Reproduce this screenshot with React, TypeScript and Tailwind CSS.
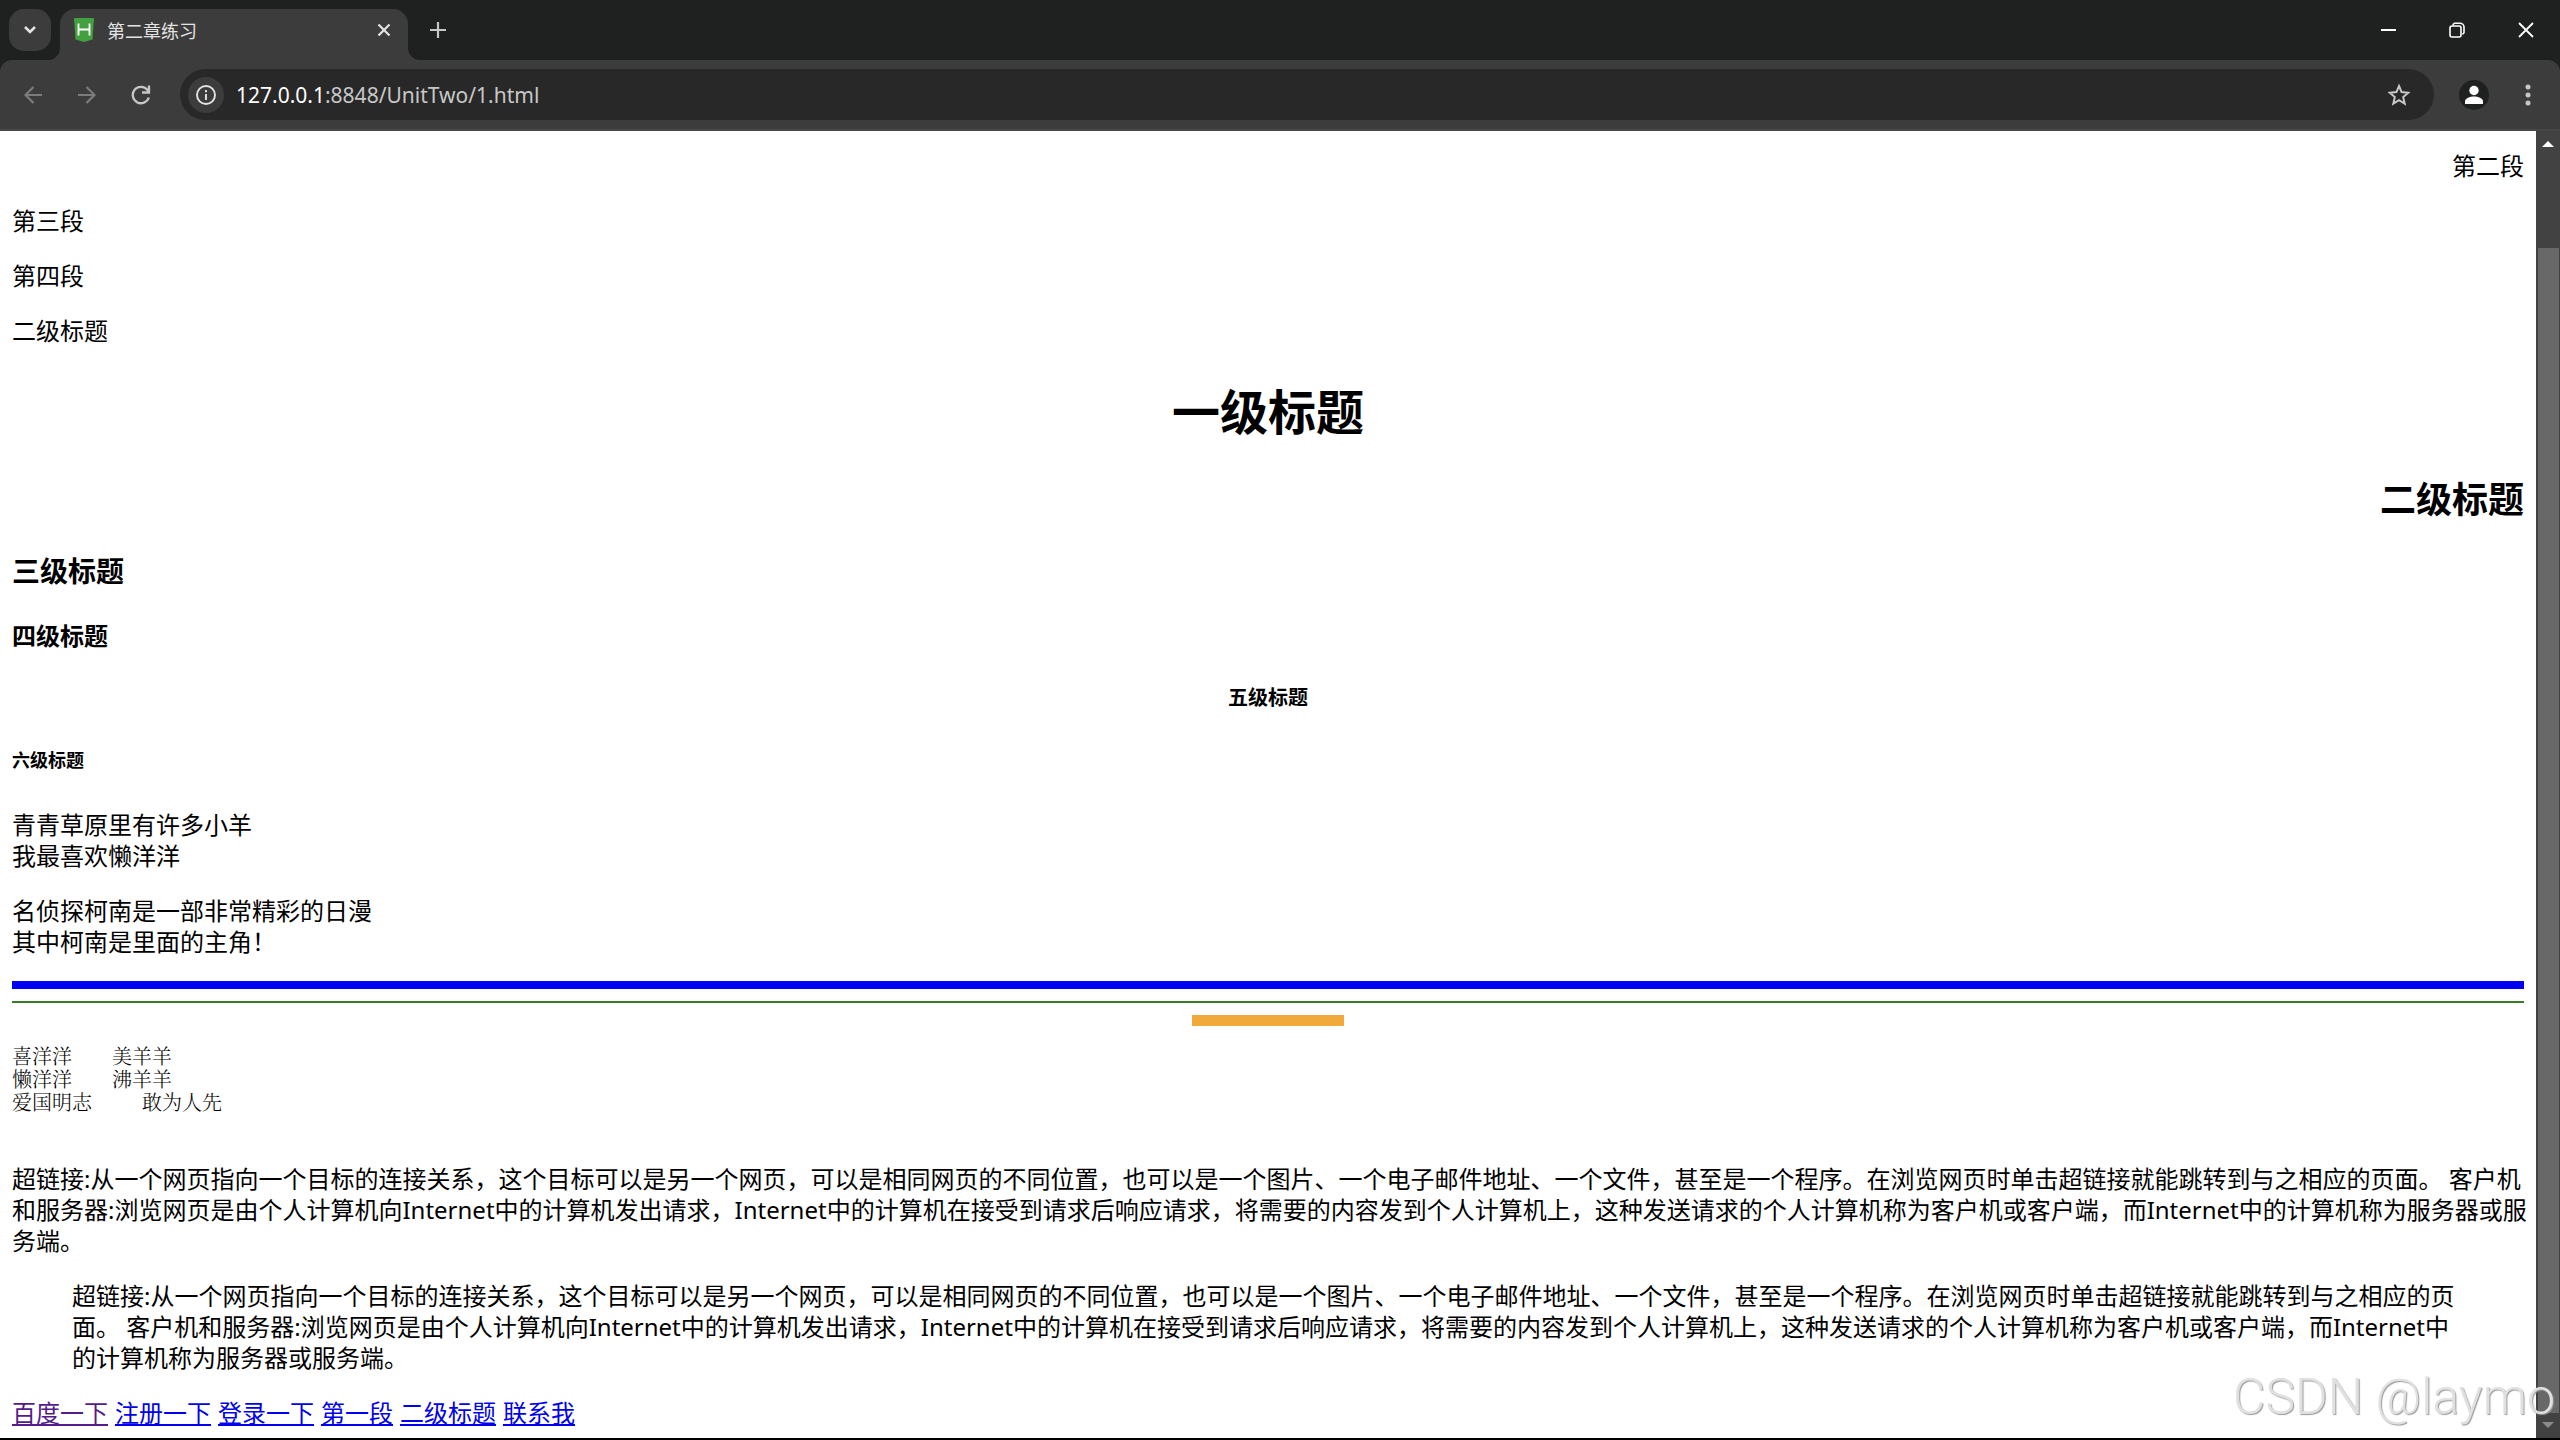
const LINK_TEXT =
  "超链接:从一个网页指向一个目标的连接关系，这个目标可以是另一个网页，可以是相同网页的不同位置，也可以是一个图片、一个电子邮件地址、一个文件，甚至是一个程序。在浏览网页时单击超链接就能跳转到与之相应的页面。 客户机和服务器:浏览网页是由个人计算机向Internet中的计算机发出请求，Internet中的计算机在接受到请求后响应请求，将需要的内容发到个人计算机上，这种发送请求的个人计算机称为客户机或客户端，而Internet中的计算机称为服务器或服务端。";

const VERSE = [
  "喜洋洋        美羊羊",
  "懒洋洋        沸羊羊",
  "爱国明志          敢为人先",
].join("\n");

const LINKS = ["注册一下", "登录一下", "第一段", "二级标题", "联系我"];

function TabStrip() {
  return (
    <div className="flex h-[60px] items-end bg-[#1f2120]">
      <button aria-label="搜索标签页" className="mb-[9px] ml-[9px] flex h-[42px] w-[42px] items-center justify-center rounded-[15px] bg-[#3c3c3c]">
        <svg width="14" height="10" viewBox="0 0 14 10" fill="none" stroke="#e3e3e3" strokeWidth="2.600">
          <path d="M2 2l5 5 5-5" />
        </svg>
      </button>
      <svg width="12" height="12" viewBox="0 0 12 12" className="-ml-[3px]">
        <path d="M12 0v12H0A12 12 0 0 0 12 0z" fill="#3c3c3c" />
      </svg>
      <div className="flex h-[51px] w-[348px] items-center rounded-t-[15px] bg-[#3c3c3c] pr-3 pl-[13px]">
        <svg width="22" height="26" viewBox="0 0 22 26" className="mb-[9px] shrink-0">
          <path d="M1 1h20l-1.500 21.500L11 25l-8.500-2.500z" fill="#43a03f" />
          <path d="M5.500 6.500v12M16.500 6.500v12M5.500 12.500h11" stroke="#fff" strokeWidth="1.800" fill="none" />
        </svg>
        <span className="mb-[7px] ml-3 flex-1 text-[18px] leading-6 text-[#e3e3e3]">第二章练习</span>
        <button aria-label="关闭标签页" className="mb-[9px] flex h-6 w-6 items-center justify-center">
          <svg width="14" height="14" viewBox="0 0 14 14" stroke="#e3e3e3" strokeWidth="2.200">
            <path d="M1.500 1.500l11 11M12.500 1.500l-11 11" />
          </svg>
        </button>
      </div>
      <svg width="12" height="12" viewBox="0 0 12 12">
        <path d="M0 0v12h12A12 12 0 0 1 0 0z" fill="#3c3c3c" />
      </svg>
      <button aria-label="新建标签页" className="mb-[18px] ml-[6px] flex h-6 w-6 items-center justify-center">
        <svg width="18" height="18" viewBox="0 0 18 18" stroke="#c7c7c7" strokeWidth="2.200">
          <path d="M9 1v16M1 9h16" />
        </svg>
      </button>
      <div className="ml-auto flex h-[60px] items-center">
        <button aria-label="最小化" className="flex h-full w-[69px] items-center justify-center">
          <svg width="16" height="16" viewBox="0 0 16 16" stroke="#fff" strokeWidth="2">
            <path d="M1 8h15" />
          </svg>
        </button>
        <button aria-label="还原" className="flex h-full w-[69px] items-center justify-center">
          <svg width="16" height="16" viewBox="0 0 16 16" fill="none" stroke="#fff" strokeWidth="1.600">
            <rect x="1" y="4" width="11" height="11" rx="2" />
            <path d="M4 3.500V3a2 2 0 0 1 1.500-1.800H11A4 4 0 0 1 15 5v5.500a2 2 0 0 1-1.800 1.500" />
          </svg>
        </button>
        <button aria-label="关闭" className="flex h-full w-[69px] items-center justify-center">
          <svg width="16" height="16" viewBox="0 0 16 16" stroke="#fff" strokeWidth="1.800">
            <path d="M1 1l14 14M15 1L1 15" />
          </svg>
        </button>
      </div>
    </div>
  );
}

function Toolbar() {
  return (
    <div className="bg-[#1f2120]">
      <div className="flex h-[71px] items-center rounded-t-[12px] border-b-2 border-[#474747] bg-[#3c3c3c] pl-[9px]">
        <button aria-label="后退" className="flex h-12 w-12 items-center justify-center">
          <svg width="20" height="20" viewBox="0 0 20 20" fill="none" stroke="#7c7c7c" strokeWidth="2.200">
            <path d="M19 10H2.500M10.500 2l-8 8 8 8" />
          </svg>
        </button>
        <button aria-label="前进" className="ml-[6px] flex h-12 w-12 items-center justify-center">
          <svg width="20" height="20" viewBox="0 0 20 20" fill="none" stroke="#7c7c7c" strokeWidth="2.200">
            <path d="M1 10h16.500M9.500 2l8 8-8 8" />
          </svg>
        </button>
        <button aria-label="重新加载" className="ml-[6px] flex h-12 w-12 items-center justify-center">
          <svg width="20" height="20" viewBox="0 0 20 20" fill="none" stroke="#c7c7c7" strokeWidth="2.300">
            <path d="M17.800 12.500A8.200 8.200 0 1 1 16.500 5L18 7" />
            <path d="M18 0.500V7.500H11" />
          </svg>
        </button>
        <div className="ml-[15px] flex h-[51px] flex-1 items-center rounded-full bg-[#282828] pr-[23px] pl-2">
          <button aria-label="查看网站信息" className="flex h-9 w-9 items-center justify-center rounded-full bg-[#3c3c3c]">
            <svg width="20" height="20" viewBox="0 0 20 20" fill="none" stroke="#e3e3e3" strokeWidth="1.900">
              <circle cx="10" cy="10" r="9" />
              <path d="M10 9v6M10 5v2.200" />
            </svg>
          </button>
          <div role="textbox" aria-label="地址栏" className="ml-3 flex-1 text-[21px] leading-[30px] text-[#c7c7c7]">
            <span className="text-white">127.0.0.1</span>:8848/UnitTwo/1.html
          </div>
          <button aria-label="为此标签页添加书签">
            <svg width="24" height="24" viewBox="0 0 24 24" fill="none" stroke="#c7c7c7" strokeWidth="2">
              <path d="M12 3l2.600 6.100 6.600.6-5 4.400 1.500 6.500L12 17.100l-5.700 3.500 1.500-6.500-5-4.400 6.600-.6z" />
            </svg>
          </button>
        </div>
        <button aria-label="个人资料" className="ml-[25px] flex h-[30px] w-[30px] items-center justify-center rounded-full bg-[#1f2120]">
          <svg width="20" height="20" viewBox="0 0 20 20" fill="#fff">
            <circle cx="10" cy="5.500" r="4.700" />
            <path d="M1 19v-2.500C1 13 6 11.500 10 11.500s9 1.500 9 5V19z" />
          </svg>
        </button>
        <button aria-label="菜单" className="mr-5 ml-[27px] flex h-12 w-6 items-center justify-center">
          <svg width="6" height="22" viewBox="0 0 6 22" fill="#c7c7c7">
            <circle cx="3" cy="3" r="2.500" />
            <circle cx="3" cy="11" r="2.500" />
            <circle cx="3" cy="19" r="2.500" />
          </svg>
        </button>
      </div>
    </div>
  );
}

function ScrollBar() {
  return (
    <div className="flex w-6 shrink-0 flex-col items-center bg-[#424242] py-[10px]">
      <svg width="12" height="6" viewBox="0 0 12 6" fill="#fff">
        <path d="M6 0l6 6H0z" />
      </svg>
      <div className="mt-[101px] mb-[9px] w-[21px] flex-1 bg-[#686868]" />
      <svg width="12" height="6" viewBox="0 0 12 6" fill="#8b8b8b">
        <path d="M0 0h12L6 6z" />
      </svg>
    </div>
  );
}

export default function App() {
  return (
    <div className="relative flex min-h-screen flex-col overflow-hidden border-b-2 border-black bg-white font-['Noto_Sans','Noto_Sans_CJK_SC',sans-serif]">
      <TabStrip />
      <Toolbar />
      <div className="flex flex-1">
        <main className="min-w-0 flex-1 px-3 pt-[19px] text-2xl leading-[31px] text-black">
          <p className="text-right">第二段</p>
          <p className="mt-6">第三段</p>
          <p className="mt-6">第四段</p>
          <p className="mt-6">二级标题</p>
          <h1 className="mt-[34px] text-center text-5xl leading-[64px] font-bold">一级标题</h1>
          <h2 className="mt-8 text-right text-4xl leading-[48px] font-bold">二级标题</h2>
          <h3 className="mt-7 text-[28px] leading-[39px] font-bold">三级标题</h3>
          <h4 className="mt-[29px] font-bold">四级标题</h4>
          <h5 className="mt-[34px] text-center text-xl leading-[26px] font-bold">五级标题</h5>
          <h6 className="mt-[37px] text-lg leading-6 font-bold">六级标题</h6>
          <p className="mt-[37px]">
            青青草原里有许多小羊
            <br />
            我最喜欢懒洋洋
          </p>
          <p className="mt-6">
            名侦探柯南是一部非常精彩的日漫
            <br />
            其中柯南是里面的主角！
          </p>
          <hr className="mt-6 h-2 border-0 bg-[#0000f5]" />
          <hr className="mt-3 h-[2px] border-0 bg-[#377e22]" />
          <hr className="mx-auto mt-3 h-[11px] w-[152px] border-0 bg-[#f2a93b]" />
          <pre className="mt-5 font-['Liberation_Serif','Noto_Serif_CJK_SC','Noto_Sans_CJK_SC',serif] text-xl leading-[23px] font-light">
            {VERSE}
          </pre>
          <p className="mt-12 -mr-2">{LINK_TEXT}</p>
          <blockquote className="mx-[60px] mt-6">{LINK_TEXT}</blockquote>
          <nav className="mt-6 flex gap-[7px]">
            <a href="#baidu" className="text-[#551a8b] underline">百度一下</a>
            {LINKS.map((label) => (
              <a key={label} href="#top" className="text-[#0000ee] underline">
                {label}
              </a>
            ))}
          </nav>
        </main>
        <ScrollBar />
      </div>
      <div className="pointer-events-none absolute right-[5px] bottom-[7px] font-['Roboto',sans-serif] text-[50px] leading-[68px] font-light text-[#e0e0e0] [text-shadow:1px_1px_1px_#999]">
        CSDN @laymo
      </div>
    </div>
  );
}
